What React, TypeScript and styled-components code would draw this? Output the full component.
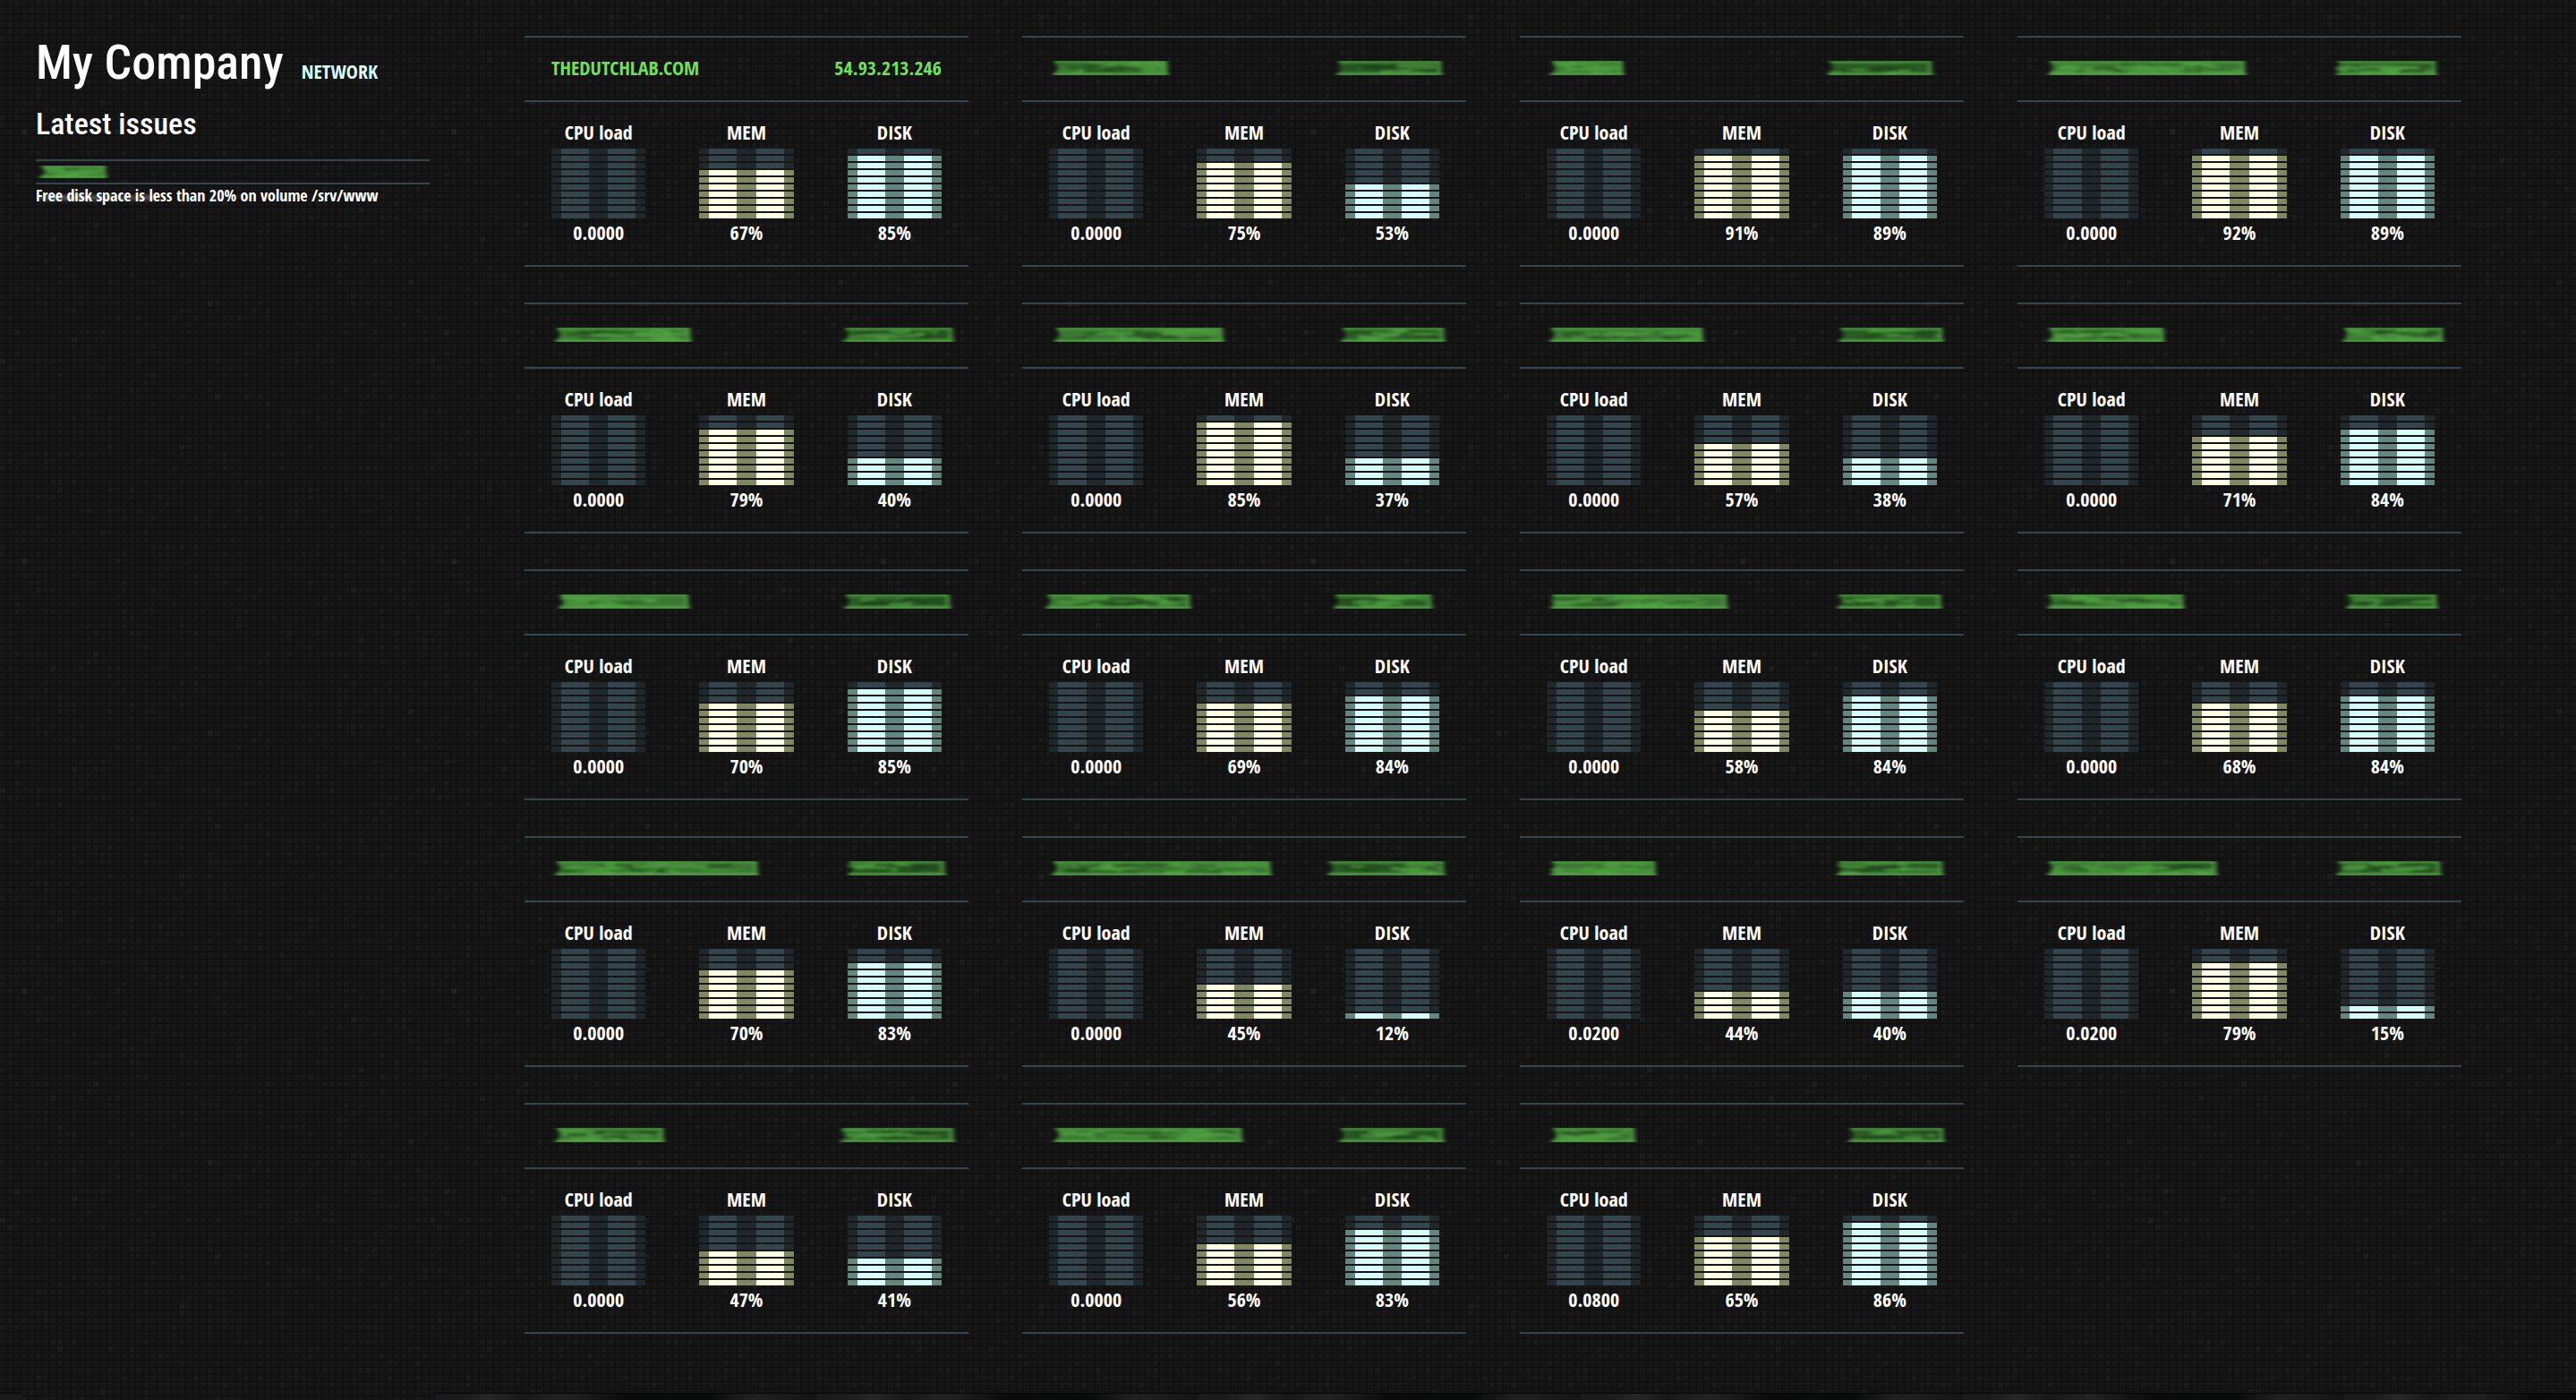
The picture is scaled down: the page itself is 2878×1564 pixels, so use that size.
import React from "react";
import styled, { createGlobalStyle } from "styled-components";

const color = {
  line: "#35464f",
  green: "#6ee25a",
  ice: "#d8fbfb",
  iceDim: "#65867f",
  cream: "#ffffe8",
  creamDim: "#808863",
  off: "#35454e",
  offDim: "#20272d",
};

const GlobalStyle = createGlobalStyle`
  * { box-sizing: border-box; }
  body {
    margin: 0;
    background: #111111;
    color: #ffffff;
    font-family: "Open Sans Condensed", "Roboto Condensed", "Open Sans", sans-serif;
    font-weight: 700;
  }
  h1, h2, h3, p, ul, dl, dd, dt { margin: 0; padding: 0; font-weight: inherit; }
`;

const Page = styled.div`
  position: relative;
  isolation: isolate;
  min-height: 100vh;
  display: flex;
  flex-direction: column;
`;

const Backdrop = styled.svg`
  position: absolute;
  inset: 0;
  z-index: -1;
  width: 100%;
  height: 100%;
`;

const Columns = styled.div`
  flex: 1;
  display: flex;
  align-items: flex-start;
  gap: 106px;
  padding: 40px 128px 40px 40px;
`;

const DesktopEdge = styled.div`
  height: 8px;
  display: flex;
`;

const EdgePiece = styled.div<{ $width?: number; $open?: boolean }>`
  flex: ${p => (p.$width ? `0 0 ${p.$width}px` : "1")};
  border-top: ${p => (p.$open ? "none" : "1px solid #050506")};
  background: ${p =>
    p.$open
      ? "none"
      : "repeating-linear-gradient(100deg, #1a1a1f 0 30px, #26262c 60px, #17171b 96px, #222227 140px, #0b0b0f 210px, #0a0b10 300px, #202025 350px, #141418 420px)"};
`;

const Sidebar = styled.aside`
  flex: 0 0 440px;
`;

const TitleRow = styled.header`
  display: flex;
  align-items: baseline;
  gap: 20px;
`;

const Title = styled.h1`
  font-family: "Roboto Condensed", sans-serif;
  font-weight: 500;
  font-size: 54px;
  line-height: 60px;
`;

const Tag = styled.span`
  font-size: 22px;
  line-height: 24px;
  color: ${color.ice};
`;

const Subtitle = styled.h2`
  margin: 18px 0 20px;
  font-family: "Roboto Condensed", sans-serif;
  font-weight: 500;
  font-size: 34px;
  line-height: 40px;
`;

const IssueList = styled.ul`
  list-style: none;
`;

const IssueHost = styled.div`
  height: 28px;
  display: flex;
  align-items: center;
  padding-left: 4px;
  border-top: 2px solid ${color.line};
  border-bottom: 2px solid ${color.line};
`;

const IssueText = styled.p`
  position: relative;
  font-size: 18px;
  line-height: 24px;
  &::after {
    content: "";
    position: absolute;
    left: 4px;
    top: 13px;
    width: 130px;
    height: 4px;
    background: linear-gradient(90deg, #fff5, #fff7 40%, #fff3 60%, #fff6);
    filter: blur(2px);
  }
`;

const Hosts = styled.main`
  flex: 1;
  display: grid;
  grid-template-columns: repeat(4, 1fr);
  gap: 40px 60px;
`;

const Card = styled.section`
  border-top: 2px solid ${color.line};
  border-bottom: 2px solid ${color.line};
`;

const CardHead = styled.div`
  display: flex;
  justify-content: space-between;
  align-items: flex-start;
  height: 72px;
  padding: 21px 30px;
  border-bottom: 2px solid ${color.line};
  font-size: 22px;
  line-height: 24px;
  color: ${color.green};
`;

const Meters = styled.dl`
  display: grid;
  grid-template-columns: repeat(3, 1fr);
  gap: 60px;
  padding: 21px 30px 25px;
`;

const MeterBox = styled.div`
  display: flex;
  flex-direction: column;
  font-size: 22px;
  line-height: 24px;
  text-align: center;
`;

const Bars = styled.dd`
  display: grid;
  gap: 2px;
  margin: 7px 0 3px;
`;

const Bar = styled.span<{ $hi: string; $lo: string }>`
  height: 6px;
  background: linear-gradient(
    90deg,
    ${p => `${p.$lo} 10%, ${p.$hi} 10% 40%, ${p.$lo} 40% 60%, ${p.$hi} 60% 90%, ${p.$lo} 90%`}
  );
`;

const SmudgeArt = styled.svg`
  display: block;
  flex: none;
  overflow: visible;
`;

function seeded(seed: number) {
  let s = seed * 7919 + 17;
  return () => {
    s = (s * 1103515245 + 12345) % 2147483648;
    return s / 2147483648;
  };
}

/* A painted-over text: a soft green block with brighter streaks along it. */
function Smudge({ from, to, box, height = 26, thick = 16, seed, deep = false }: {
  from: number; to: number; box: number; height?: number; thick?: number; seed: number; deep?: boolean;
}) {
  const rnd = seeded(seed);
  const w = to - from;
  const top = (height - thick) / 2;
  const bottom = top + thick;
  const id = `smudge${seed}`;
  const streaks = Array.from({ length: Math.round(w / 12) + 3 }, () => {
    const x = from + rnd() * (w - 30);
    const y = top + 3 + rnd() * (thick - 6);
    const len = 18 + rnd() * 30;
    const bend = (rnd() - 0.5) * 9;
    return {
      d: `M${x} ${y} q${len / 2} ${bend} ${Math.min(len, to - x - 3)} ${-bend / 2}`,
      dark: rnd() < (deep ? 0.55 : 0.4),
    };
  });
  return (
    <SmudgeArt width={box} height={height} role="img" aria-label="Hidden">
      <defs>
        <filter id={id} x="-10%" y="-30%" width="120%" height="160%">
          <feGaussianBlur stdDeviation="2.8 1.4" />
        </filter>
        <clipPath id={`${id}c`}>
          <rect x={from - 6} y={top} width={w + 12} height={thick} />
        </clipPath>
      </defs>
      <g clipPath={`url(#${id}c)`}>
        <g filter={`url(#${id})`} fill="none" strokeWidth="3">
          <path
            d={`M${from + 2} ${top - 1} H${to - 2} L${to - 1} ${bottom + 1} H${from + 1} L${from + 6} ${top + thick / 2} Z`}
            fill={deep ? "#2b5c25" : "#3a7731"}
          />
          {streaks.map((s, i) => (
            <path key={i} d={s.d} stroke={s.dark ? "#1f451b" : "#50a042"} opacity={s.dark ? 0.7 : 0.8} />
          ))}
          <path d={`M${from + 2} ${top + 1} H${to - 2}`} stroke="#50a442" strokeWidth="2" />
          <path d={`M${from} ${bottom - 1} H${to}`} stroke="#5cbc4c" strokeWidth="2" />
          <path d={`M${to - 4} ${top + 1} V${bottom}`} stroke="#4e9c41" />
        </g>
      </g>
    </SmudgeArt>
  );
}

type Span = [number, number];
type Host = { name: string | Span; ip: string | Span; cpu: string; mem: number; disk: number };

const HEAD = 436;

const hosts: Host[] = [
  { name: "THEDUTCHLAB.COM", ip: "54.93.213.246", cpu: "0.0000", mem: 67, disk: 85 },
  { name: [4, 134], ip: [321, 440], cpu: "0.0000", mem: 75, disk: 53 },
  { name: [4, 87], ip: [314, 432], cpu: "0.0000", mem: 91, disk: 89 },
  { name: [4, 226], ip: [326, 439], cpu: "0.0000", mem: 92, disk: 89 },
  { name: [4, 157], ip: [326, 450], cpu: "0.0000", mem: 79, disk: 40 },
  { name: [6, 196], ip: [326, 443], cpu: "0.0000", mem: 85, disk: 37 },
  { name: [3, 176], ip: [326, 444], cpu: "0.0000", mem: 57, disk: 38 },
  { name: [3, 135], ip: [333, 447], cpu: "0.0000", mem: 71, disk: 84 },
  { name: [8, 155], ip: [327, 447], cpu: "0.0000", mem: 70, disk: 85 },
  { name: [-4, 159], ip: [318, 429], cpu: "0.0000", mem: 69, disk: 84 },
  { name: [4, 203], ip: [324, 442], cpu: "0.0000", mem: 58, disk: 84 },
  { name: [3, 157], ip: [337, 440], cpu: "0.0000", mem: 68, disk: 84 },
  { name: [4, 232], ip: [331, 441], cpu: "0.0000", mem: 70, disk: 83 },
  { name: [3, 249], ip: [311, 443], cpu: "0.0000", mem: 45, disk: 12 },
  { name: [4, 123], ip: [324, 444], cpu: "0.0200", mem: 44, disk: 40 },
  { name: [3, 194], ip: [326, 444], cpu: "0.0200", mem: 79, disk: 15 },
  { name: [4, 127], ip: [324, 451], cpu: "0.0000", mem: 47, disk: 41 },
  { name: [5, 217], ip: [324, 442], cpu: "0.0000", mem: 56, disk: 83 },
  { name: [5, 100], ip: [337, 445], cpu: "0.0800", mem: 65, disk: 86 },
];

function Meter({ label, value, level, hi, lo }: {
  label: string; value: string; level: number; hi: string; lo: string;
}) {
  const lit = Math.round(level / 10);
  return (
    <MeterBox>
      <dt>{label}</dt>
      <Bars aria-hidden="true">
        {Array.from({ length: 10 }, (_, i) =>
          i >= 10 - lit
            ? <Bar key={i} $hi={hi} $lo={lo} />
            : <Bar key={i} $hi={color.off} $lo={color.offDim} />
        )}
      </Bars>
      <dd>{value}</dd>
    </MeterBox>
  );
}

function HostCard({ host, index }: { host: Host; index: number }) {
  const { name, ip } = host;
  return (
    <Card>
      <CardHead>
        {typeof name === "string"
          ? <span>{name}</span>
          : <Smudge from={name[0]} to={name[1]} box={name[1]} seed={index * 2 + 1} />}
        {typeof ip === "string"
          ? <span>{ip}</span>
          : <Smudge from={ip[0] - HEAD + 130} to={ip[1] - HEAD + 130} box={130} seed={index * 2 + 2} deep />}
      </CardHead>
      <Meters>
        <Meter label="CPU load" value={host.cpu} level={Number(host.cpu)} hi={color.ice} lo={color.iceDim} />
        <Meter label="MEM" value={`${host.mem}%`} level={host.mem} hi={color.cream} lo={color.creamDim} />
        <Meter label="DISK" value={`${host.disk}%`} level={host.disk} hi={color.ice} lo={color.iceDim} />
      </Meters>
    </Card>
  );
}

/* Dark tiles of 8px with a scatter of slightly lighter ones. */
const TILE = 8;
const SIDE = 60;
const tileRnd = seeded(42);
const lightTiles = Array.from({ length: 700 }, () => ({
  x: Math.floor(tileRnd() * SIDE) * TILE,
  y: Math.floor(tileRnd() * SIDE) * TILE,
  o: 0.006 + tileRnd() * 0.01,
}));

function Texture() {
  return (
    <Backdrop aria-hidden="true">
      <defs>
        <pattern id="tile" width={TILE} height={TILE} patternUnits="userSpaceOnUse">
          <rect width={TILE} height={TILE} fill="#0f0f0f" />
          <rect width="7" height="7" fill="#131313" />
          <rect width="6" height="6" fill="#161616" />
        </pattern>
        <pattern id="scatter" width={TILE * SIDE} height={TILE * SIDE} patternUnits="userSpaceOnUse">
          {lightTiles.map((t, i) => (
            <rect key={i} x={t.x} y={t.y} width="6" height="6" fill="#ffffff" opacity={t.o} />
          ))}
        </pattern>
      </defs>
      <rect width="100%" height="100%" fill="url(#tile)" />
      <rect width="100%" height="100%" fill="url(#scatter)" />
    </Backdrop>
  );
}

export default function App() {
  return (
    <Page>
      <GlobalStyle />
      <Texture />
      <Columns>
        <Sidebar>
          <TitleRow>
            <Title>My Company</Title>
            <Tag>NETWORK</Tag>
          </TitleRow>
          <Subtitle>Latest issues</Subtitle>
          <IssueList>
            <li>
              <IssueHost>
                <Smudge from={0} to={76} box={80} height={24} thick={14} seed={99} />
              </IssueHost>
              <IssueText>Free disk space is less than 20% on volume /srv/www</IssueText>
            </li>
          </IssueList>
        </Sidebar>
        <Hosts>
          {hosts.map((host, i) => <HostCard key={i} host={host} index={i} />)}
        </Hosts>
      </Columns>
      <DesktopEdge aria-hidden="true">
        <EdgePiece $width={24} />
        <EdgePiece $width={463} $open />
        <EdgePiece />
      </DesktopEdge>
    </Page>
  );
}
